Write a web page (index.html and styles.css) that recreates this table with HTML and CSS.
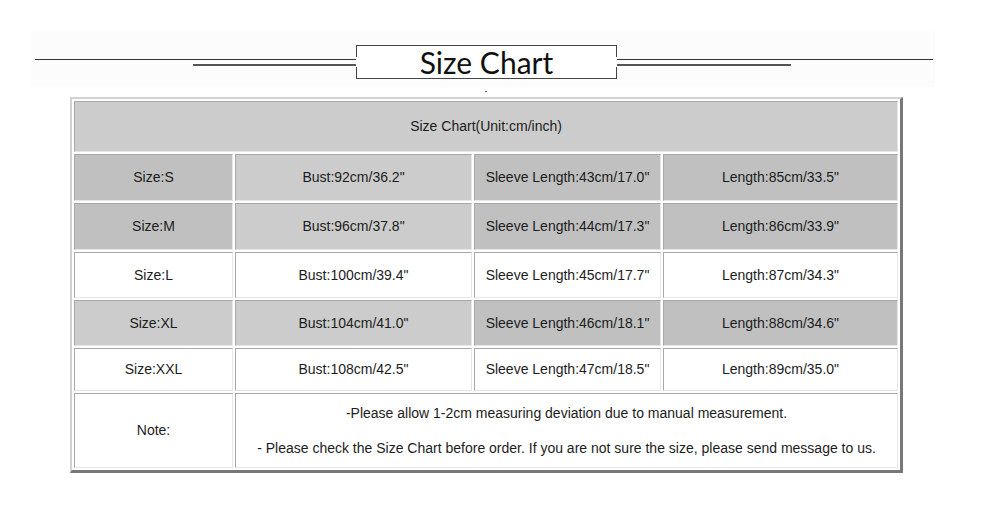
FILE: index.html
```html
<!DOCTYPE html>
<html lang="en">
<head>
<meta charset="utf-8">
<title>Size Chart</title>
<link rel="stylesheet" href="styles.css">
</head>
<body>
<div class="banner">
  <div class="title-row">
    <div class="rule rule-left"><div class="line1"></div><div class="line2"></div></div>
    <div class="title-box">Size Chart</div>
    <div class="rule rule-right"><div class="line1"></div><div class="line2"></div></div>
  </div>
</div>
<div class="spacer"><div class="dot"></div></div>
<table class="chart">
  <colgroup>
    <col class="col-size">
    <col class="col-bust">
    <col class="col-sleeve">
    <col class="col-length">
  </colgroup>
  <tr class="r-head"><td colspan="4" class="c-mid">Size Chart(Unit:cm/inch)</td></tr>
  <tr class="r-s">
    <td class="c-dark">Size:S</td><td class="c-mid">Bust:92cm/36.2"</td><td class="c-dark">Sleeve Length:43cm/17.0"</td><td class="c-dark">Length:85cm/33.5"</td>
  </tr>
  <tr class="r-m">
    <td class="c-dark">Size:M</td><td class="c-mid">Bust:96cm/37.8"</td><td class="c-dark">Sleeve Length:44cm/17.3"</td><td class="c-dark">Length:86cm/33.9"</td>
  </tr>
  <tr class="r-l">
    <td>Size:L</td><td>Bust:100cm/39.4"</td><td>Sleeve Length:45cm/17.7"</td><td>Length:87cm/34.3"</td>
  </tr>
  <tr class="r-xl">
    <td class="c-mid">Size:XL</td><td class="c-mid">Bust:104cm/41.0"</td><td class="c-dark">Sleeve Length:46cm/18.1"</td><td class="c-dark">Length:88cm/34.6"</td>
  </tr>
  <tr class="r-xxl">
    <td>Size:XXL</td><td>Bust:108cm/42.5"</td><td>Sleeve Length:47cm/18.5"</td><td>Length:89cm/35.0"</td>
  </tr>
  <tr class="r-note">
    <td>Note:</td>
    <td colspan="3">
      <div class="note-line">-Please allow 1-2cm measuring deviation due to manual measurement.</div>
      <div class="note-line">- Please check the Size Chart before order. If you are not sure the size, please send message to us.</div>
    </td>
  </tr>
</table>
</body>
</html>
```
FILE: styles.css
```css
html, body {
  margin: 0;
  padding: 0;
  background: #ffffff;
}

body {
  width: 1000px;
  height: 506px;
  overflow: hidden;
  font-family: "Liberation Sans", Arial, sans-serif;
  color: #222;
}

.banner {
  margin: 30px 0 0 30px;
  width: 905px;
  height: 57px;
  background: #fcfcfc;
}

.title-row {
  display: flex;
  padding: 15px 0 0 5px;
}

.rule {
  display: flex;
  flex-direction: column;
}

.rule-left {
  width: 321px;
}

.rule-right {
  width: 316px;
}

.line1 {
  margin-top: 14px;
  height: 1px;
  background: #333;
}

.line2 {
  margin-top: 4px;
  height: 2px;
  background: #555;
}

.rule-left .line2 {
  width: 163px;
  align-self: flex-end;
}

.rule-right .line2 {
  width: 174px;
  align-self: flex-start;
}

.title-box {
  box-sizing: border-box;
  width: 261px;
  height: 34px;
  border-top: 1px solid #444;
  border-bottom: 1px solid #444;
  background:
    linear-gradient(#444, #444) left top / 1px 11px no-repeat,
    linear-gradient(#444, #444) left bottom / 1px 11px no-repeat,
    linear-gradient(#444, #444) right top / 1px 11px no-repeat,
    linear-gradient(#444, #444) right bottom / 1px 11px no-repeat,
    #ffffff;
  font-family: Lato, "Open Sans", sans-serif;
  font-size: 30px;
  line-height: 32px;
  color: #111;
  text-align: center;
}

.spacer {
  box-sizing: border-box;
  height: 10px;
  padding-top: 4px;
}

.dot {
  margin-left: 485px;
  width: 2px;
  height: 1px;
  background: #666;
}

.chart {
  margin-left: 70px;
  width: 833px;
  border-collapse: separate;
  border-spacing: 2px;
  border-style: solid;
  border-width: 2px 3px 3px 2px;
  border-color: #d2d2d2 #777 #777 #d2d2d2;
  background: #fff;
  table-layout: fixed;
}

.col-size { width: 159px; }
.col-bust { width: 237px; }
.col-sleeve { width: 187px; }
.col-length { width: 235px; }

.chart td {
  padding: 0;
  border: 1px solid;
  border-color: #a8a8a8 #e6e6e6 #e6e6e6 #a8a8a8;
  text-align: center;
  vertical-align: middle;
  font-size: 14px;
  line-height: 17px;
  color: #1c1c1c;
  background: #fff;
}

.chart td.c-mid { background: #cccccc; }
.chart td.c-dark { background: #c0c0c0; }

.r-head { height: 51px; }
.r-s { height: 47px; }
.r-m { height: 47px; }
.r-l { height: 46px; }
.r-xl { height: 46px; }
.r-xxl { height: 43px; }
.r-note { height: 75px; }

.note-line {
  white-space: nowrap;
}

.note-line + .note-line {
  margin-top: 18px;
}
```
